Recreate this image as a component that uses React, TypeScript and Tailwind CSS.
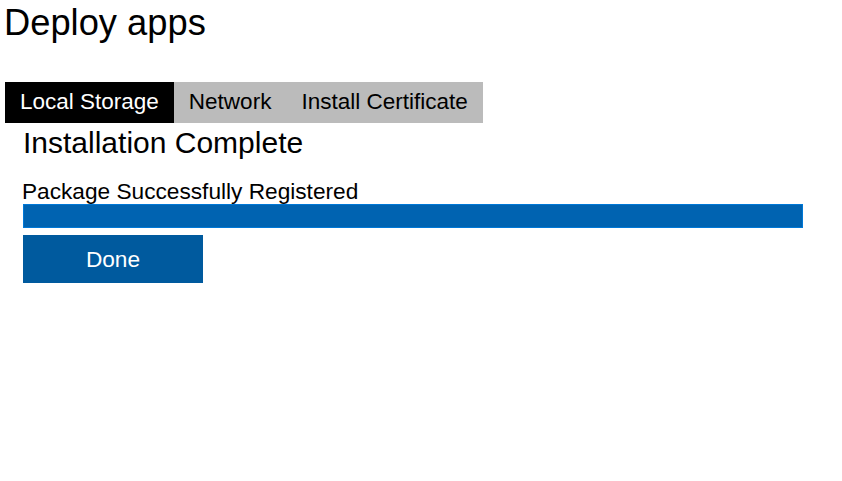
const tabs = ["Local Storage", "Network", "Install Certificate"];

export default function App() {
  return (
    <div className="min-h-[481px] bg-white text-black font-['Liberation_Sans',Arial,sans-serif]">
      <h1 className="pl-[4px] pt-[2px] text-[36.3px] leading-[41px]">Deploy apps</h1>

      <div className="ml-[5px] mt-[39px] flex w-fit bg-[#bbbbbb]">
        {tabs.map((t, i) => (
          <div
            key={t}
            className={
              i === 0
                ? "h-[41px] px-[15px] pb-[2px] flex items-center text-[22.5px] bg-black text-white"
                : "h-[41px] px-[15px] pb-[2px] flex items-center text-[22.5px] text-black"
            }
          >
            {t}
          </div>
        ))}
      </div>

      <div className="pl-[23px] w-[803px]">
        <h2 className="pt-[3px] text-[30px] leading-[34px]">Installation Complete</h2>
        <p className="-ml-[1px] mt-[18px] text-[22.67px] leading-[26px]">Package Successfully Registered</p>
        <div className="h-[24px] w-[780px] border border-[#0078d7] bg-[#0063b1]" />
        <button className="mt-[7px] h-[48px] w-[180px] bg-[#005a9e] text-white text-[22.67px]">
          Done
        </button>
      </div>
    </div>
  );
}
